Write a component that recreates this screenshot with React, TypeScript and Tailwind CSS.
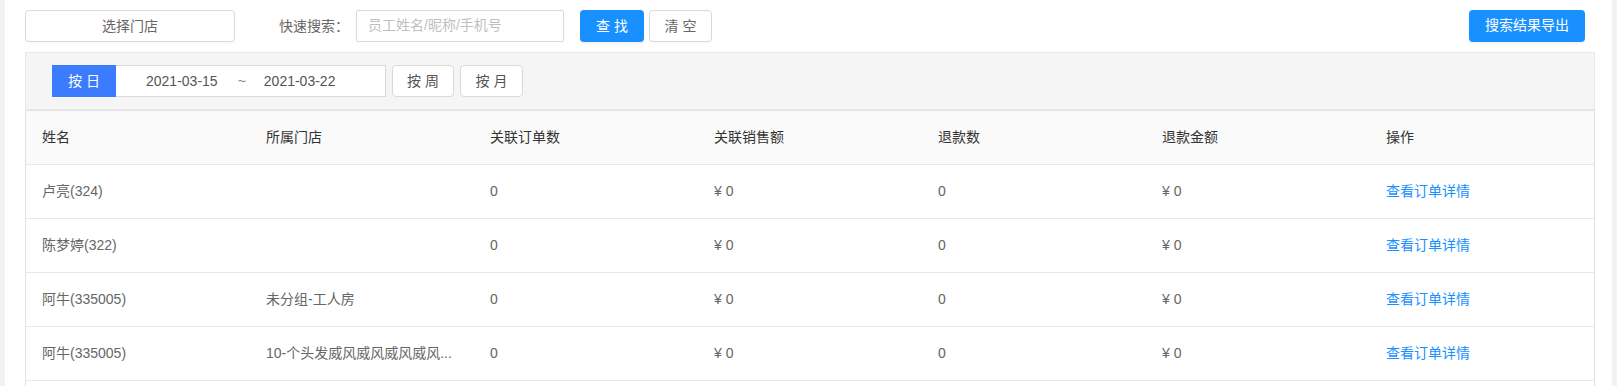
import React from "react";

const columns = ["姓名", "所属门店", "关联订单数", "关联销售额", "退款数", "退款金额", "操作"];

const rows = [
  { name: "卢亮(324)", store: "", orders: "0", sales: "¥ 0", refunds: "0", refundAmount: "¥ 0" },
  { name: "陈梦婷(322)", store: "", orders: "0", sales: "¥ 0", refunds: "0", refundAmount: "¥ 0" },
  { name: "阿牛(335005)", store: "未分组-工人房", orders: "0", sales: "¥ 0", refunds: "0", refundAmount: "¥ 0" },
  { name: "阿牛(335005)", store: "10-个头发威风威风威风威风...", orders: "0", sales: "¥ 0", refunds: "0", refundAmount: "¥ 0" },
];

const cell = "pl-[16px] whitespace-nowrap";

export default function App() {
  return (
    <div
      className="flex h-[386px] overflow-hidden bg-[#f0f2f5] px-[5px] text-[14px]"
      style={{ fontFamily: '"Liberation Sans", "Noto Sans CJK SC", sans-serif' }}
    >
      <div className="flex-1 bg-white pl-[20px] pr-[17px]">
        {/* toolbar */}
        <div className="flex items-center pt-[10px] mb-[10px]">
          <button className="w-[210px] h-[32px] rounded-[4px] border border-[#d9d9d9] bg-white text-[#666] shadow-[0_2px_0_rgba(0,0,0,0.02)]">
            选择门店
          </button>
          <span className="ml-[44px] text-[#666]">快速搜索：</span>
          <div className="ml-[7px] -mt-px w-[208px] h-[32px] border border-[#d9d9d9] rounded-[2px] px-[11px] flex items-center text-[#bfbfbf]">
            员工姓名/昵称/手机号
          </div>
          <button className="ml-[16px] w-[64px] h-[32px] rounded-[4px] bg-[#1890ff] text-white shadow-[0_2px_0_rgba(0,0,0,0.045)]">
            查 找
          </button>
          <button className="ml-[5px] w-[63px] h-[32px] rounded-[4px] border border-[#d9d9d9] bg-white text-[#666] shadow-[0_2px_0_rgba(0,0,0,0.02)]">
            清 空
          </button>
          <button className="ml-auto mr-[10px] -mt-px w-[116px] h-[32px] rounded-[4px] bg-[#1890ff] text-white shadow-[0_2px_0_rgba(0,0,0,0.045)]">
            搜索结果导出
          </button>
        </div>

        {/* date filter */}
        <div className="flex items-center border border-[#e8e8e8] bg-[#f5f5f5] px-[26px] py-[12px]">
          <div className="w-[64px] h-[32px] flex items-center justify-center bg-[#3b7bfd] text-white">按 日</div>
          <div className="w-[270px] h-[32px] flex items-center bg-white border border-l-0 border-[#d9d9d9] pl-[30px] text-[#555]">
            <span>2021-03-15</span>
            <span className="ml-[20px] text-[#888]">~</span>
            <span className="ml-[18px]">2021-03-22</span>
          </div>
          <button className="ml-[6px] w-[62px] h-[32px] rounded-[4px] border border-[#d9d9d9] bg-white text-[#555]">
            按 周
          </button>
          <button className="ml-[6px] w-[63px] h-[32px] rounded-[4px] border border-[#d9d9d9] bg-white text-[#555]">
            按 月
          </button>
        </div>

        {/* table */}
        <div className="border-x border-t border-[#e2e2e2]">
          <div className="grid grid-cols-7 items-center h-[54px] bg-[#fafafa] border-b border-[#e8e8e8] text-[#333]">
            {columns.map((c) => (
              <div key={c} className={cell}>
                {c}
              </div>
            ))}
          </div>
          {rows.map((r, i) => (
            <div key={i} className="grid grid-cols-7 items-center h-[54px] border-b border-[#e8e8e8] text-[#666]">
              <div className={cell}>{r.name}</div>
              <div className={cell}>{r.store}</div>
              <div className={cell}>{r.orders}</div>
              <div className={cell}>{r.sales}</div>
              <div className={cell}>{r.refunds}</div>
              <div className={cell}>{r.refundAmount}</div>
              <div className={cell}>
                <span className="text-[#1890ff] cursor-pointer">查看订单详情</span>
              </div>
            </div>
          ))}
          <div className="h-[54px]" />
        </div>
      </div>
    </div>
  );
}
